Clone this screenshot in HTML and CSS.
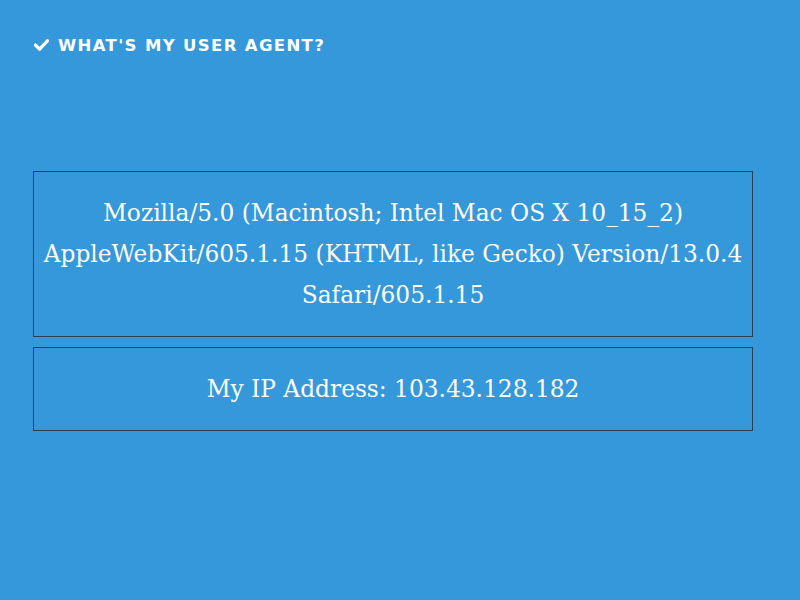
FILE: index.html
```html
<!DOCTYPE html>
<html>
<head>
<meta charset="utf-8">
<link rel="stylesheet" href="styles.css">
</head>
<body>
<div class="page">
  <h1 class="title">
    <svg class="check" width="15" height="12" viewBox="0 0 15 12"><path d="M1.5 6.2 L5.6 10.2 L13.5 1.8" fill="none" stroke="#fff" stroke-width="3.2" stroke-linecap="square"/></svg>
    <span>WHAT'S MY USER AGENT?</span>
  </h1>
  <div class="boxes">
    <div class="box ua">Mozilla/5.0 (Macintosh; Intel Mac OS X 10_15_2) AppleWebKit/605.1.15 (KHTML, like Gecko) Version/13.0.4 Safari/605.1.15</div>
    <div class="box ip">My IP Address: 103.43.128.182</div>
  </div>
</div>
</body>
</html>
```
FILE: styles.css
```css
html, body {
  margin: 0;
  padding: 0;
  background: #3498db;
  height: 100%;
}
.page {
  width: 720px;
  padding: 35px 0 0 33px;
}
.title {
  margin: 0;
  display: flex;
  align-items: center;
  gap: 9px;
  height: 20px;
  color: #fff;
  font-family: "DejaVu Sans", sans-serif;
  font-weight: bold;
  font-size: 16.5px;
  letter-spacing: 1.35px;
}
.check {
  display: block;
  margin-left: 1px;
}
.boxes {
  margin-top: 116px;
  display: flex;
  flex-direction: column;
  gap: 10px;
}
.box {
  border: 1px solid #2c3e50;
  color: #fff;
  font-family: "DejaVu Serif", serif;
  font-size: 23.3px;
  line-height: 41px;
  text-align: center;
}
.ua {
  padding: 20px 0 21px;
}
.ip {
  padding: 20px 0 21px;
}
```
